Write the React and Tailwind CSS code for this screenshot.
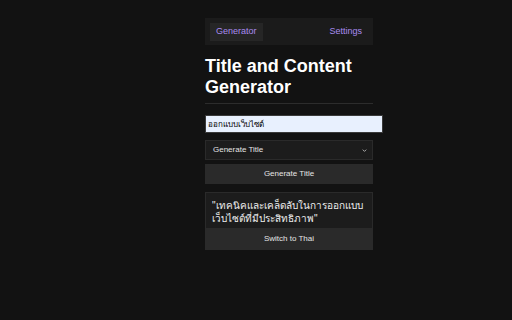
import React from 'react';

const App = () => {
  return (
    <div className="min-h-[320px] w-full bg-[#121212] font-['Liberation_Sans',Arial,sans-serif] text-white">
      <div className="ml-[205px] w-[168px] pt-[18px]">
        <nav className="flex h-[27px] items-center justify-between bg-[#1b1b1b] px-[5px] text-[9px] text-[#a98bef]">
          <span className="flex h-[18px] items-center bg-[#262626] px-[6px]">Generator</span>
          <span className="flex h-[18px] items-center px-[6px]">Settings</span>
        </nav>

        <h1 className="mt-[11px] text-[18px] font-bold leading-[21px]">Title and Content Generator</h1>
        <div className="mt-[5px] h-px bg-[#2c2c2c]" />

        <input
          className="mt-[11px] block h-[18px] w-[178px] border border-[#3a3a3a] bg-[#e8f0fe] px-[2px] text-[8px] text-black outline-none"
          defaultValue="ออกแบบเว็บไซต์"
        />

        <div className="mt-[7px] flex h-[20px] items-center justify-between border border-[#2a2a2a] bg-[#1c1c1c] pl-[7px] pr-[4px] text-[8px] text-[#e5e5e5]">
          <span>Generate Title</span>
          <svg width="7" height="7" viewBox="0 0 24 24" fill="none" stroke="#bbb" strokeWidth="3">
            <path d="M6 9l6 6 6-6" />
          </svg>
        </div>

        <button className="mt-[4px] flex h-[20px] w-full items-center justify-center bg-[#2a2a2a] text-[8px] text-[#e5e5e5]">
          Generate Title
        </button>

        <div className="mt-[8px] border border-[#2a2a2a] bg-[#1c1c1c]">
          <p className="px-[6px] pb-[3px] pt-[6px] text-[10px] leading-[13px] text-[#eeeeee]">
            "เทคนิคและเคล็ดลับในการออกแบบเว็บไซต์ที่มีประสิทธิภาพ"
          </p>
          <button className="flex h-[21px] w-full items-center justify-center bg-[#2a2a2a] text-[8px] text-[#e5e5e5]">
            Switch to Thai
          </button>
        </div>
      </div>
    </div>
  );
};

export default App;
